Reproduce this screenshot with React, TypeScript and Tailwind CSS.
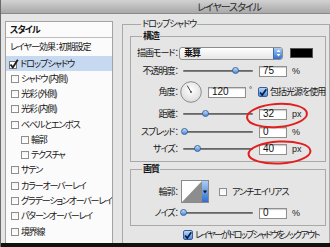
const jp = "font-['Noto_Sans_CJK_JP',sans-serif] [font-feature-settings:'palt'] tracking-[-1px]"
const num = "font-['Liberation_Sans',sans-serif] tracking-normal"

const effects = [
  { label: "ドロップシャドウ", selected: true },
  { label: "シャドウ (内側)" },
  { label: "光彩 (外側)" },
  { label: "光彩 (内側)" },
  { label: "ベベルとエンボス" },
  { label: "輪郭", indent: true },
  { label: "テクスチャ", indent: true },
  { label: "サテン" },
  { label: "カラーオーバーレイ" },
  { label: "グラデーションオーバーレイ" },
  { label: "パターンオーバーレイ" },
  { label: "境界線" },
]

function Box() {
  return <div className="w-[8px] h-[8px] shrink-0 border border-[#8e8e8e] bg-gradient-to-b from-[#f4f4f4] to-white" />
}

function BlueCheck() {
  return (
    <div className="w-[10px] h-[10px] shrink-0 rounded-[2px] border border-[#3b5e96] bg-gradient-to-b from-[#b9d7f7] to-[#4a8ddf] flex items-center justify-center">
      <svg width="9" height="9" viewBox="0 0 9 9">
        <path d="M1.2 4.6 L3.6 7.4 L8.2 0.8" fill="none" stroke="#0d1b3a" strokeWidth="1.8" />
      </svg>
    </div>
  )
}

function Slider({ at }: { at: number }) {
  return (
    <div className="relative ml-[5px] w-[70px] h-[8px] flex items-center shrink-0">
      <div className="h-[2px] w-full rounded-full bg-gradient-to-b from-[#5a5a5a] to-[#8c8c8c]" />
      <div
        className="absolute top-[0px] w-[7px] h-[7px] rounded-full border border-[#3a64a0] bg-gradient-to-b from-[#c3ddf8] to-[#4b8ad6]"
        style={{ left: at - 3.5 }}
      />
    </div>
  )
}

function NumBox({ value, w = "w-[28px]" }: { value: string; w?: string }) {
  return (
    <div
      className={`${w} h-[11px] shrink-0 ml-[6px] bg-white border border-[#8f8f8f] shadow-[inset_0_1px_1px_rgba(0,0,0,0.2)] pl-[3px] flex items-center ${num} text-[10px] text-[#111]`}
    >
      {value}
    </div>
  )
}

function Label({ text }: { text: string }) {
  return <div className="w-[47px] shrink-0 text-right whitespace-nowrap">{text}</div>
}

function Unit({ text }: { text: string }) {
  return <span className={`ml-[5px] ${num} text-[9px] text-[#222]`}>{text}</span>
}

export default function App() {
  return (
    <div className={`relative w-[330px] h-[247px] overflow-hidden bg-[#e5e5e5] border-l border-[#6a6a6a] flex flex-col ${jp} text-[9px] leading-[12px] text-[#151515]`}>
      {/* title bar */}
      <div className="h-[14px] shrink-0 bg-gradient-to-b from-[#d2d2d2] to-[#a9a9a9] border-b border-[#8a8a8a] pl-[196px] flex items-center text-[10px] text-[#2a2a2a]">
        レイヤースタイル
      </div>

      <div className="flex flex-1 min-h-0">
        {/* style list */}
        <div className="w-[121px] shrink-0 pl-[4px] pt-[7px]">
          <div className="w-[108px] h-full border border-b-0 border-[#a3a3a3] bg-[#fbfbfb] overflow-hidden">
            <div className="h-[16px] border-b border-[#bdbdbd] pl-[4px] flex items-center font-bold">スタイル</div>
            <div className="h-[18px] pl-[4px] flex items-center">レイヤー効果：初期設定</div>
            {effects.map((e) =>
              e.selected ? (
                <div key={e.label} className="h-[15px] bg-[#c6d9f0] pl-[2px] flex items-center">
                  <svg width="11" height="10" viewBox="0 0 11 10" className="shrink-0">
                    <rect x="1.5" y="2.5" width="7" height="7" fill="white" stroke="#777" />
                    <path d="M2.5 5.5 L4.8 8.4 L9.8 0.8" fill="none" stroke="#1b1b1b" strokeWidth="1.8" />
                  </svg>
                  <span className="ml-[1px]">{e.label}</span>
                </div>
              ) : (
                <div key={e.label} className={`h-[15.3px] flex items-center ${e.indent ? "pl-[15px]" : "pl-[5px]"}`}>
                  <Box />
                  <span className="ml-[2px] whitespace-nowrap tracking-[-1.2px]">{e.label}</span>
                </div>
              )
            )}
          </div>
        </div>

        {/* drop shadow settings */}
        <fieldset className="mt-[4px] w-[208px] h-[240px] shrink-0 border border-b-0 border-[#a9a9a9] pl-[7px] pr-[3px] min-w-0">
          <legend className="ml-[11px] px-[1px] leading-[12px]">ドロップシャドウ</legend>

          <fieldset className="border border-[#a9a9a9] pb-[5px] min-w-0">
            <legend className="ml-[11px] px-[1px] leading-[12px] font-bold">構造</legend>

            <div className="mt-[4px] h-[14px] flex items-center">
              <Label text="描画モード：" />
              <div className="ml-[1px] w-[104px] h-[13px] shrink-0 rounded-[3px] border border-[#8d8d8d] bg-gradient-to-b from-white to-[#e6e6e6] flex items-center justify-between pl-[4px] overflow-hidden">
                <span className="font-bold">乗算</span>
                <div className="w-[9px] h-full border-l border-[#3d6bb0] bg-gradient-to-b from-[#a9cdf4] to-[#2f6ecd] flex items-center justify-center">
                  <svg width="5" height="8" viewBox="0 0 5 8">
                    <path d="M2.5 0.5 L4.5 3 L0.5 3 Z M2.5 7.5 L4.5 5 L0.5 5 Z" fill="#fff" />
                  </svg>
                </div>
              </div>
              <div className="ml-[7px] w-[23px] h-[10px] shrink-0 bg-black border border-[#555]" />
            </div>

            <div className="mt-[4px] h-[14px] flex items-center">
              <Label text="不透明度：" />
              <Slider at={52} />
              <NumBox value="75" />
              <Unit text="%" />
            </div>

            <div className="mt-[3px] h-[22px] flex items-center">
              <Label text="角度：" />
              <svg width="22" height="22" viewBox="0 0 22 22" className="ml-[2px] shrink-0">
                <defs>
                  <radialGradient id="dial" cx="50%" cy="40%" r="60%">
                    <stop offset="0%" stopColor="#ffffff" />
                    <stop offset="100%" stopColor="#dcdcdc" />
                  </radialGradient>
                </defs>
                <circle cx="11" cy="11" r="10.3" fill="url(#dial)" stroke="#8c8c8c" strokeWidth="1" />
                <line x1="11" y1="11" x2="7.2" y2="4.6" stroke="#444" strokeWidth="1" />
                <circle cx="11" cy="11" r="0.9" fill="#444" />
              </svg>
              <NumBox value="120" w="w-[38px]" />
              <span className={`w-[12px] shrink-0 pl-[3px] ${num} text-[8px] -mt-[5px]`}>°</span>
              <BlueCheck />
              <span className="ml-[2px] whitespace-nowrap">包括光源を使用</span>
            </div>

            <div className="mt-[4px] h-[14px] flex items-center">
              <Label text="距離：" />
              <Slider at={22} />
              <NumBox value="32" />
              <Unit text="px" />
            </div>

            <div className="mt-[4px] h-[14px] flex items-center">
              <Label text="スプレッド：" />
              <Slider at={1} />
              <NumBox value="0" />
              <Unit text="%" />
            </div>

            <div className="mt-[3px] h-[14px] flex items-center">
              <Label text="サイズ：" />
              <Slider at={14} />
              <NumBox value="40" />
              <Unit text="px" />
            </div>
          </fieldset>

          <fieldset className="mt-[1px] border border-[#a9a9a9] pb-[5px] min-w-0">
            <legend className="ml-[11px] px-[1px] leading-[12px] font-bold">画質</legend>

            <div className="mt-[5px] h-[23px] flex items-center">
              <Label text="輪郭：" />
              <div className="ml-[3px] h-[23px] shrink-0 flex border border-[#8a8a8a]">
                <svg width="20" height="21" viewBox="0 0 20 21">
                  <rect width="20" height="21" fill="#fff" />
                  <path d="M0 21 L20 0 L20 21 Z" fill="#8d8d8d" />
                </svg>
                <div className="w-[6px] bg-gradient-to-b from-[#a9cdf4] to-[#2f6ecd] flex items-center justify-center">
                  <svg width="4" height="4" viewBox="0 0 4 4">
                    <path d="M0 0.5 L4 0.5 L2 3.5 Z" fill="#111" />
                  </svg>
                </div>
              </div>
              <div className="ml-[10px]">
                <Box />
              </div>
              <span className="ml-[5px] whitespace-nowrap">アンチエイリアス</span>
            </div>

            <div className="mt-[3px] h-[14px] flex items-center">
              <Label text="ノイズ：" />
              <Slider at={0} />
              <NumBox value="0" />
              <Unit text="%" />
            </div>
          </fieldset>

          <div className="mt-[4px] h-[10px] pl-[53px] flex items-center">
            <BlueCheck />
            <span className="ml-[2px] whitespace-nowrap tracking-[-1.7px]">レイヤーがドロップシャドウをノックアウト</span>
          </div>
        </fieldset>
      </div>

      <div className="h-[4px] shrink-0 bg-[#111]" />

      {/* hand-drawn marks */}
      <svg width="330" height="247" className="absolute inset-0 pointer-events-none">
        <ellipse cx="276" cy="115.5" rx="30" ry="11.5" transform="rotate(-4 276 115.5)" fill="none" stroke="#e21f1f" strokeWidth="2" />
        <ellipse cx="278.5" cy="152.5" rx="31" ry="11" transform="rotate(-3 278.5 152.5)" fill="none" stroke="#e21f1f" strokeWidth="2" />
      </svg>
    </div>
  )
}
